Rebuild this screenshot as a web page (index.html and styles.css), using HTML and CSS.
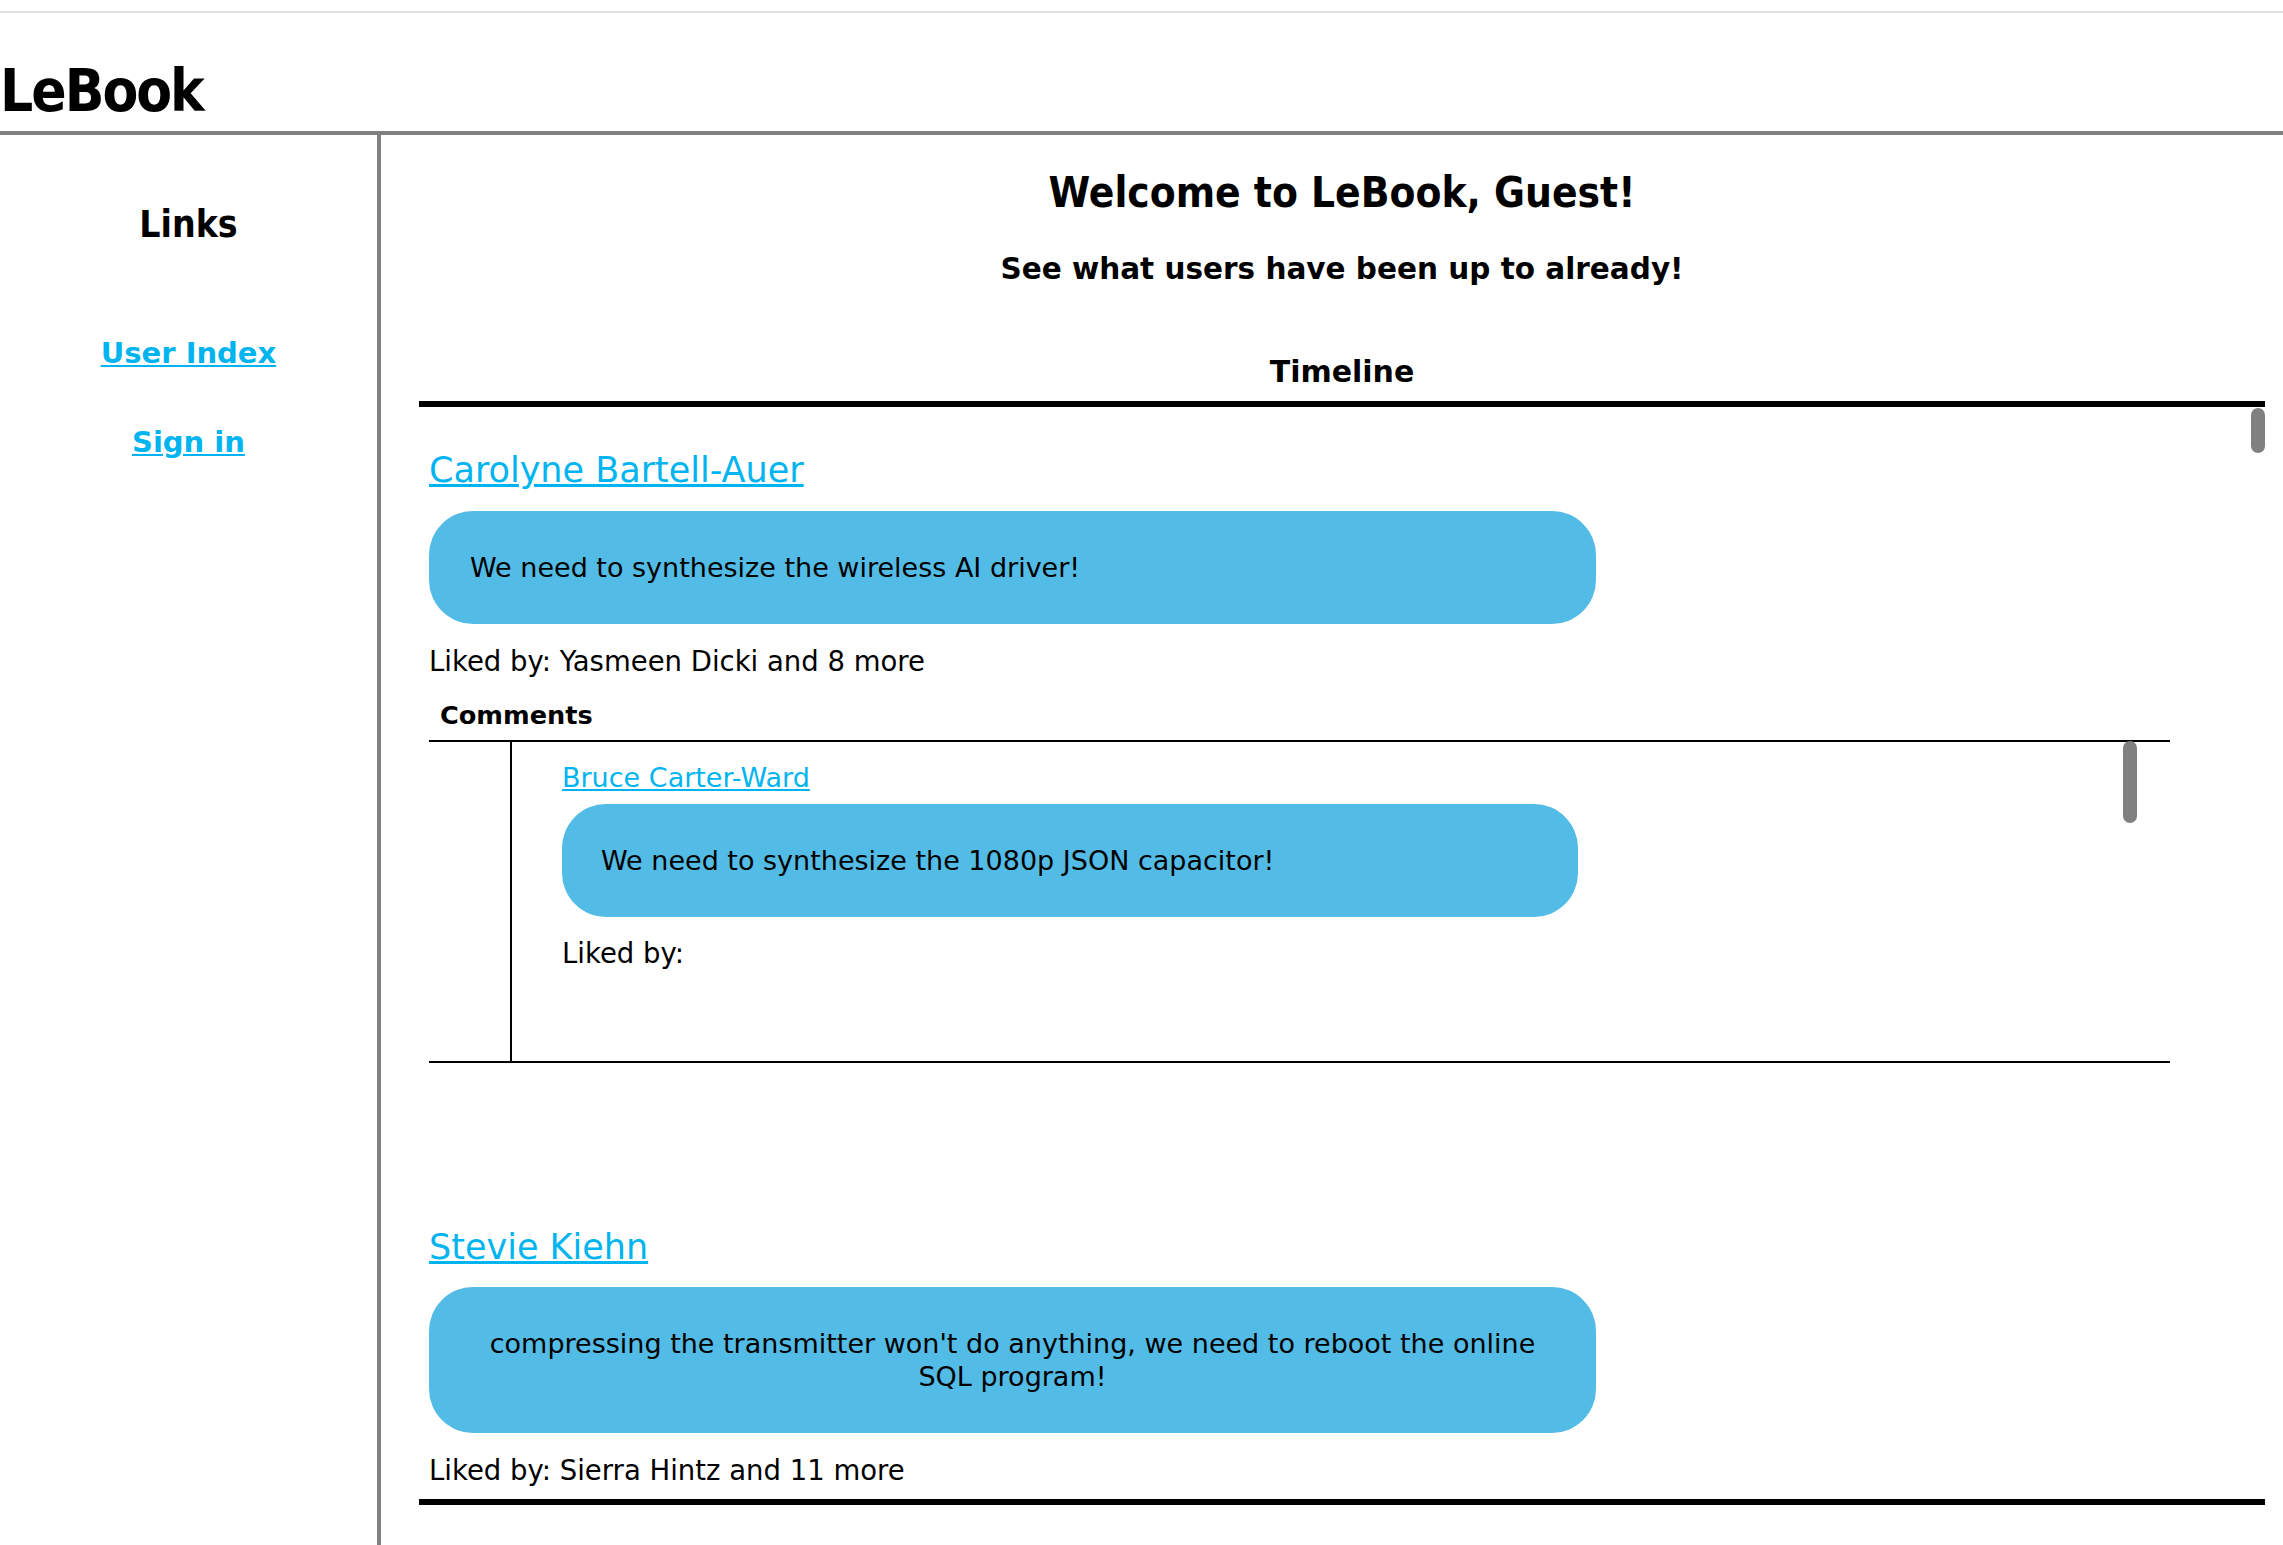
FILE: index.html
```html
<!DOCTYPE html>
<html lang="en">
<head>
<meta charset="utf-8">
<title>LeBook</title>
<link rel="stylesheet" href="styles.css">
</head>
<body>
<header class="site-header">
  <h1 class="brand">LeBook</h1>
</header>
<div class="layout">
  <nav class="sidebar">
    <h2 class="sidebar-title">Links</h2>
    <a class="side-link side-link-first" href="#">User Index</a>
    <a class="side-link" href="#">Sign in</a>
  </nav>
  <main class="main">
    <h2 class="welcome">Welcome to LeBook, Guest!</h2>
    <h3 class="subtitle">See what users have been up to already!</h3>
    <h4 class="timeline-title">Timeline</h4>
    <section class="timeline">
      <div class="thumb thumb-timeline"></div>

      <article class="post">
        <div class="author"><a class="link" href="#">Carolyne Bartell-Auer</a></div>
        <div class="bubble post-bubble"><p class="bubble-text">We need to synthesize the wireless AI driver!</p></div>
        <p class="likes">Liked by: Yasmeen Dicki and 8 more</p>
        <h5 class="comments-title">Comments</h5>
        <div class="comments">
          <div class="thumb thumb-comments"></div>
          <div class="comments-gutter"></div>
          <div class="comments-list">
            <div class="comment">
              <div class="comment-author"><a class="link" href="#">Bruce Carter-Ward</a></div>
              <div class="bubble comment-bubble"><p class="bubble-text">We need to synthesize the 1080p JSON capacitor!</p></div>
              <p class="likes comment-likes">Liked by:</p>
            </div>
          </div>
        </div>
      </article>

      <article class="post">
        <div class="author"><a class="link" href="#">Stevie Kiehn</a></div>
        <div class="bubble post-bubble"><p class="bubble-text">compressing the transmitter won't do anything, we need to reboot the online SQL program!</p></div>
        <p class="likes">Liked by: Sierra Hintz and 11 more</p>
      </article>
    </section>
  </main>
</div>
</body>
</html>
```

FILE: styles.css
```css
* {
  box-sizing: border-box;
}

html,
body {
  margin: 0;
  padding: 0;
}

body {
  font-family: "DejaVu Sans", "Liberation Sans", sans-serif;
  color: #000;
  background: #fff;
  height: 1545px;
  overflow: hidden;
  padding-top: 11px;
  display: flex;
  flex-direction: column;
}

.site-header {
  border-top: 2px solid #e0e0e0;
  border-bottom: 4px solid #808080;
  padding: 46px 0 8px;
}

.brand {
  margin: 0;
  font-family: "DejaVu Sans Condensed", "DejaVu Sans", sans-serif;
  font-weight: bold;
  font-size: 58px;
  line-height: 64px;
  letter-spacing: -2px;
}

.layout {
  flex: 1;
  display: flex;
  min-height: 0;
}

.sidebar {
  width: 381px;
  flex: none;
  border-right: 4px solid #808080;
  display: flex;
  flex-direction: column;
  align-items: center;
  padding-top: 68px;
}

.sidebar-title {
  margin: 0;
  font-family: "DejaVu Sans Condensed", "DejaVu Sans", sans-serif;
  font-weight: bold;
  font-size: 37px;
  line-height: 44px;
}

.side-link {
  font-weight: bold;
  font-size: 29px;
  line-height: 34px;
  color: #00b4f0;
  text-decoration: underline;
  margin-top: 55px;
}

.side-link-first {
  margin-top: 89px;
}

.main {
  flex: 1;
  min-width: 0;
  padding: 33px 18px 0 38px;
}

.welcome {
  margin: 0;
  text-align: center;
  font-family: "DejaVu Sans Condensed", "DejaVu Sans", sans-serif;
  font-weight: bold;
  font-size: 42px;
  line-height: 50px;
}

.subtitle {
  margin: 33px 0 0;
  text-align: center;
  font-weight: bold;
  font-size: 29.5px;
  line-height: 36px;
}

.timeline-title {
  margin: 67px 0 0;
  text-align: center;
  font-weight: bold;
  font-size: 30px;
  line-height: 36px;
}

.timeline {
  margin-top: 11px;
  height: 1104px;
  border-top: 6px solid #000;
  border-bottom: 6px solid #000;
  overflow: hidden;
  position: relative;
  padding-left: 10px;
}

.thumb {
  position: absolute;
  width: 14px;
  border-radius: 7px;
  background: #808080;
  z-index: 2;
}

.thumb-timeline {
  top: 1px;
  right: 0;
  height: 45px;
}

.thumb-comments {
  top: -1px;
  left: 1694px;
  height: 82px;
}

.post {
  padding-top: 43px;
  margin-bottom: 121px;
}

.author {
  font-size: 35px;
  line-height: 41px;
}

.link {
  color: #00b4f0;
  text-decoration: underline;
}

.bubble {
  display: flex;
  background: #53bce6;
  border-radius: 44px;
  padding: 40px 41px;
}

.post-bubble {
  width: 1167px;
  margin-top: 19.5px;
}

.bubble-text {
  margin: 0;
  text-align: center;
  font-size: 27px;
  line-height: 33px;
}

.likes {
  margin: 21px 0 0;
  font-size: 27.5px;
  line-height: 33px;
}

.comments-title {
  margin: 22px 0 0;
  padding-left: 11px;
  font-weight: bold;
  font-size: 25.6px;
  line-height: 30px;
}

.comments {
  margin-top: 10px;
  width: 1741px;
  height: 323px;
  border-top: 2px solid #000;
  border-bottom: 2px solid #000;
  display: flex;
  position: relative;
}

.comments-gutter {
  width: 81px;
  flex: none;
}

.comments-list {
  width: 1630px;
  flex: none;
  border-left: 2px solid #000;
  overflow: hidden;
}

.comment {
  padding: 20.7px 0 0 50px;
}

.comment-author {
  font-size: 27px;
  line-height: 32px;
}

.comment-bubble {
  width: 1016px;
  margin-top: 10.3px;
  padding: 40px 39px;
}

.comment-likes {
  margin-top: 20px;
}
```
